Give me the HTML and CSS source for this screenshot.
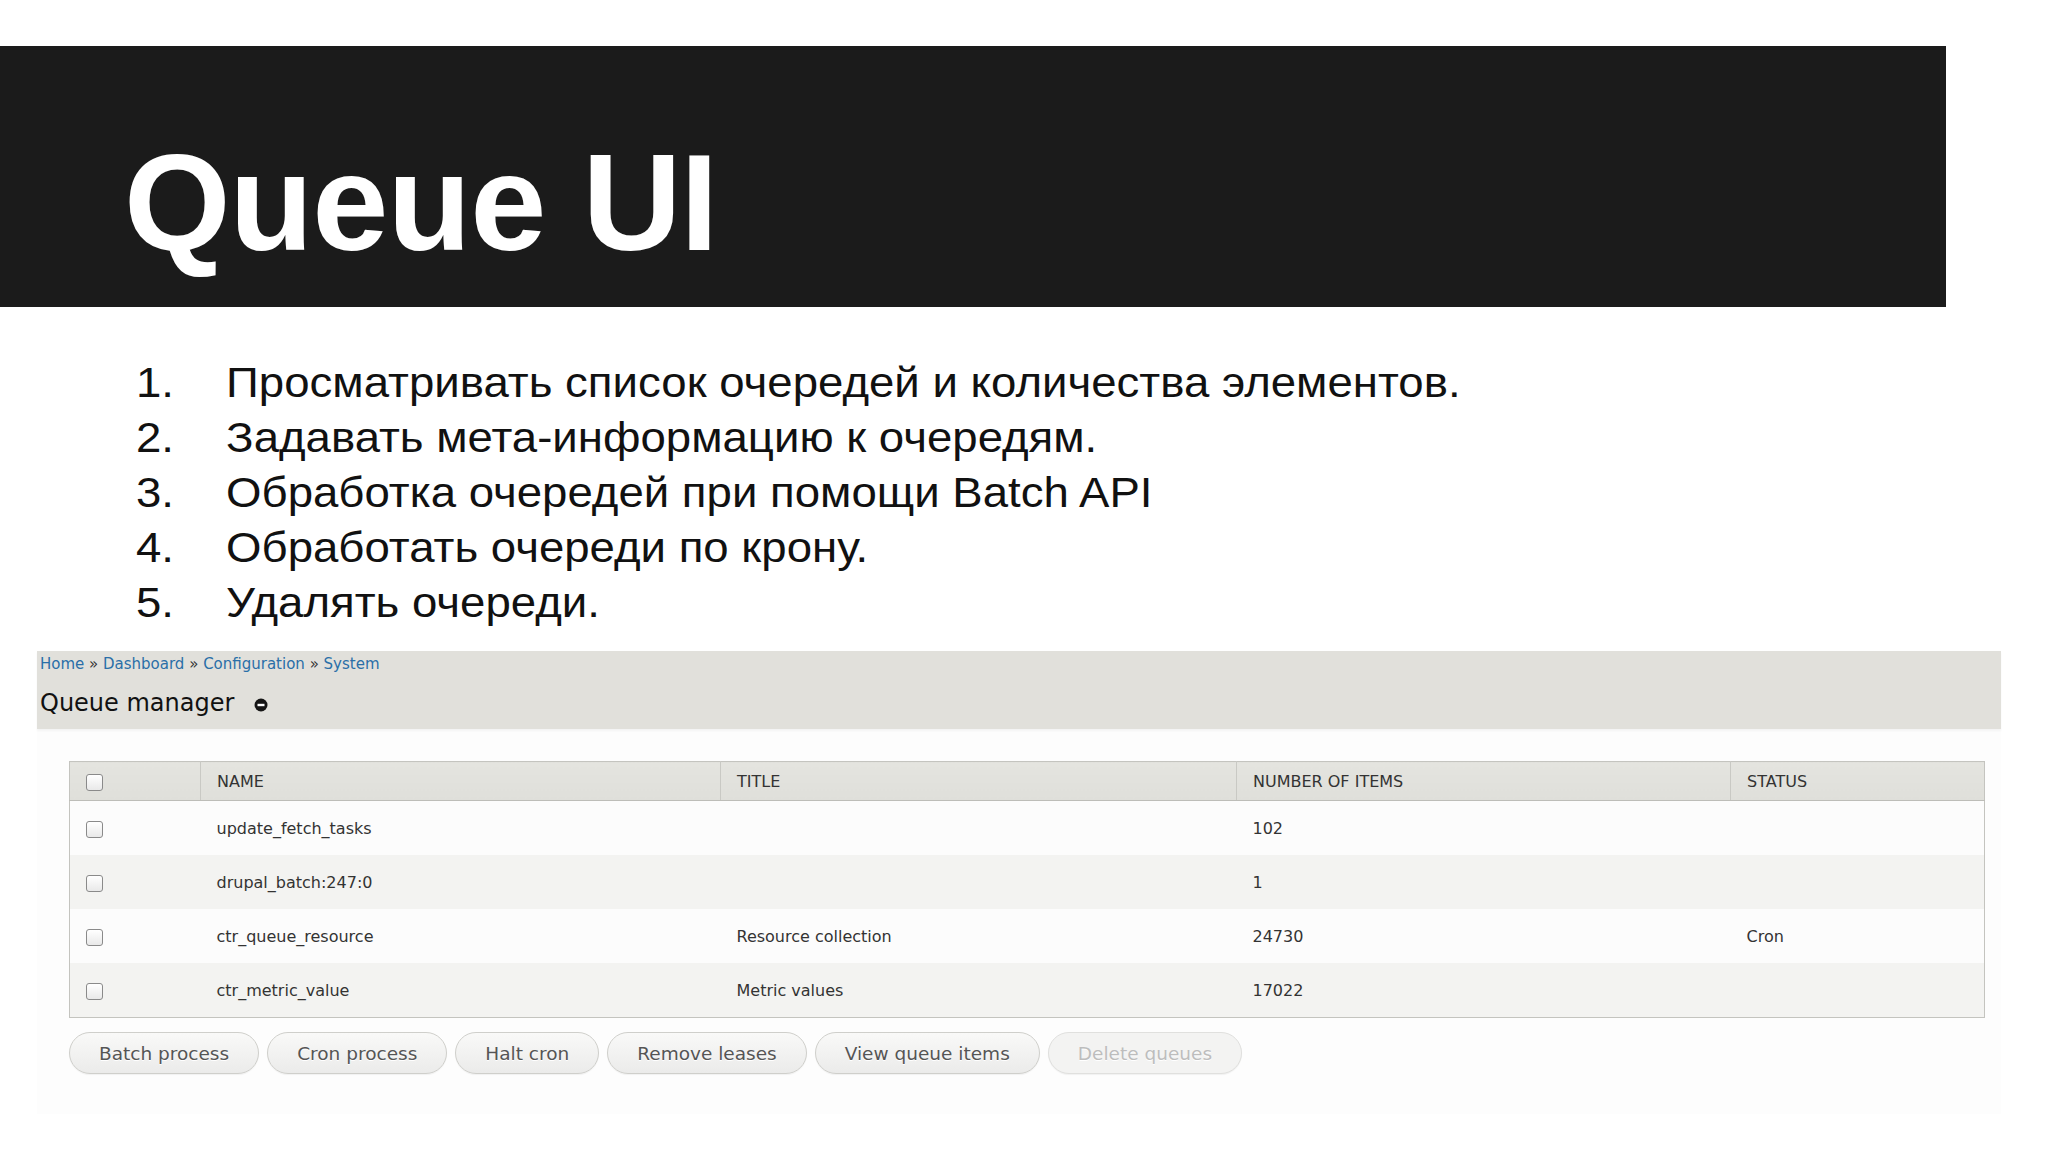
FILE: index.html
```
<!DOCTYPE html>
<html>
<head>
    <meta charset="UTF-8">
    <title>Queue UI</title>
    <link rel="stylesheet" href="styles.css">
</head>
<body>
    <div class="slide-header">
        <h1>Queue UI</h1>
    </div>

    <ol class="points">
        <li><span class="num">1.</span>Просматривать список очередей и количества элементов.</li>
        <li><span class="num">2.</span>Задавать мета-информацию к очередям.</li>
        <li><span class="num">3.</span>Обработка очередей при помощи Batch API</li>
        <li><span class="num">4.</span>Обработать очереди по крону.</li>
        <li><span class="num">5.</span>Удалять очереди.</li>
    </ol>

    <div class="drupal">
        <div class="page-head">
            <div class="breadcrumb">
                <a href="#">Home</a> » <a href="#">Dashboard</a> » <a href="#">Configuration</a> » <a href="#">System</a>
            </div>
            <h2>Queue manager
                <svg class="shortcut" width="14" height="14" viewBox="0 0 14 14">
                    <circle cx="7" cy="7" r="6.5" fill="#151515"/>
                    <rect x="3.5" y="5.8" width="7" height="2.4" fill="#fff"/>
                </svg>
            </h2>
        </div>

        <table class="queues">
            <thead>
                <tr>
                    <th class="col-check"><span class="check"></span></th>
                    <th class="col-name">Name</th>
                    <th class="col-title">Title</th>
                    <th class="col-count">Number of items</th>
                    <th class="col-status">Status</th>
                </tr>
            </thead>
            <tbody>
                <tr>
                    <td><span class="check"></span></td>
                    <td>update_fetch_tasks</td>
                    <td></td>
                    <td>102</td>
                    <td></td>
                </tr>
                <tr class="even">
                    <td><span class="check"></span></td>
                    <td>drupal_batch:247:0</td>
                    <td></td>
                    <td>1</td>
                    <td></td>
                </tr>
                <tr>
                    <td><span class="check"></span></td>
                    <td>ctr_queue_resource</td>
                    <td>Resource collection</td>
                    <td>24730</td>
                    <td>Cron</td>
                </tr>
                <tr class="even">
                    <td><span class="check"></span></td>
                    <td>ctr_metric_value</td>
                    <td>Metric values</td>
                    <td>17022</td>
                    <td></td>
                </tr>
            </tbody>
        </table>

        <div class="actions">
            <button class="btn">Batch process</button>
            <button class="btn">Cron process</button>
            <button class="btn">Halt cron</button>
            <button class="btn">Remove leases</button>
            <button class="btn">View queue items</button>
            <button class="btn" disabled>Delete queues</button>
        </div>
    </div>
</body>
</html>
```

FILE: styles.css
```
body {
    margin: 0;
    padding: 0;
    background-color: #fff;
    font-family: "Liberation Sans", Arial, sans-serif;
}

/* Slide title */
.slide-header {
    margin-top: 46px;
    width: 1946px;
    height: 261px;
    background-color: #1b1b1b;
    box-sizing: border-box;
    padding: 88px 0 0 124px;
}
.slide-header h1 {
    margin: 0;
    font-size: 137px;
    line-height: 1;
    font-weight: bold;
    color: #fff;
    letter-spacing: -1px;
}

/* Bullet list (slide text is a bit wider than Arial) */
.points {
    list-style: none;
    width: max-content;
    margin: 48px 0 0;
    padding: 0 0 0 136px;
    font-size: 43px;
    line-height: 55px;
    color: #111;
    transform: scaleX(1.06);
    transform-origin: 136px 0;
}
.points li {
    display: flex;
}
.points .num {
    width: 85px;
    flex-shrink: 0;
}

/* Drupal admin screenshot */
.drupal {
    margin: 21px 0 0 37px;
    width: 1964px;
    font-family: "DejaVu Sans", Verdana, sans-serif;
    color: #333;
    background-color: #fdfdfd;
    padding-bottom: 40px;
}
.page-head {
    background-color: #e1e0db;
    padding: 3px 0 11px 3px;
    box-shadow: 0 2px 2px rgba(0, 0, 0, 0.04);
}
.breadcrumb {
    font-size: 15px;
    line-height: 20px;
    color: #333;
}
.breadcrumb a {
    color: #2a6fa8;
    text-decoration: none;
}
.page-head h2 {
    margin: 14px 0 0;
    font-size: 24px;
    line-height: 30px;
    font-weight: normal;
    color: #111;
}
.shortcut {
    margin-left: 12px;
    vertical-align: -1px;
}

.queues {
    margin: 32px 0 0 32px;
    width: 1916px;
    border-collapse: collapse;
    border: 1px solid #c4c4bf;
    font-size: 16px;
    table-layout: fixed;
}
.queues th {
    height: 38px;
    padding: 0 0 0 16px;
    text-align: left;
    font-weight: normal;
    text-transform: uppercase;
    color: #333;
    background: linear-gradient(#e4e4df, #dfdfda);
    border-bottom: 1px solid #bdbdb8;
    border-left: 1px solid #c9c9c4;
}
.queues th.col-check {
    border-left: none;
    width: 114px;
    padding-left: 16px;
}
.queues th.col-name { width: 503px; }
.queues th.col-title { width: 499px; }
.queues th.col-count { width: 477px; }
.queues td {
    height: 54px;
    padding: 0 0 0 16px;
    color: #333;
    background-color: #fcfcfc;
}
.queues tr.even td {
    background-color: #f3f3f1;
}
.check {
    display: inline-block;
    width: 15px;
    height: 15px;
    border: 1px solid #8a8a8a;
    border-radius: 3px;
    background: linear-gradient(#fff, #e9e9e9);
    vertical-align: middle;
}

.actions {
    margin: 14px 0 0 32px;
    display: flex;
    gap: 8px;
}
.btn {
    height: 42px;
    padding: 0 29px;
    border: 1px solid #cfcfcb;
    border-radius: 21px;
    background: linear-gradient(#f9f9f8, #ebebea);
    font-family: "DejaVu Sans", Verdana, sans-serif;
    font-size: 18.5px;
    color: #555;
    text-shadow: 0 1px #fff;
    box-shadow: 0 1px 1px rgba(0, 0, 0, 0.05);
    cursor: pointer;
}
.btn[disabled] {
    color: #bdbdbd;
    background: #f3f3f2;
    border-color: #e0e0de;
    cursor: default;
}
```
